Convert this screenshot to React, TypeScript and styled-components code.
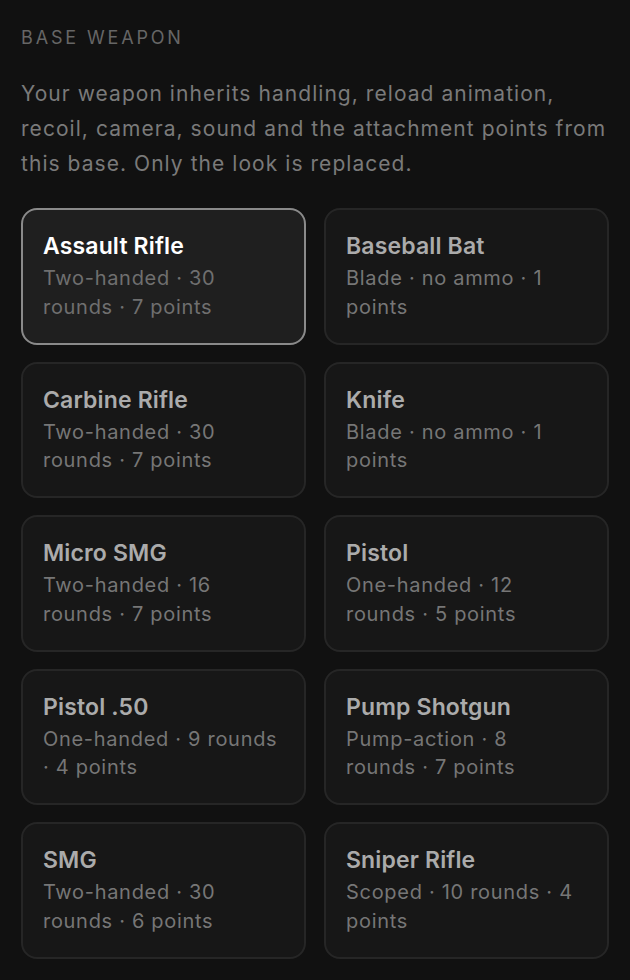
import React, {useState} from "react";
import styled, {createGlobalStyle} from "styled-components";

const GlobalStyle = createGlobalStyle`
    html, body {
        margin: 0;
        padding: 0;
        background: #111111;
    }
    body {
        font-family: Inter, "Noto Sans", "Liberation Sans", sans-serif;
        -webkit-font-smoothing: antialiased;
    }
`;

const Page = styled.div`
    padding: 27px 21px 20px;
    min-height: 980px;
    box-sizing: border-box;
    background: #111111;
`;

const Label = styled.div`
    font-size: 18px;
    letter-spacing: 2.85px;
    text-transform: uppercase;
    color: #666666;
    line-height: 22px;
    margin-bottom: 27px;
`;

const Intro = styled.p`
    margin: 0 0 27px;
    font-size: 21px;
    line-height: 35px;
    letter-spacing: 1.05px;
    color: #7a7a7a;
`;

const Grid = styled.div`
    display: grid;
    grid-template-columns: 1fr 1fr;
    gap: 17px 18px;
`;

const Card = styled.button<{
    active: boolean;
}>`
    text-align: left;
    font-family: inherit;
    cursor: pointer;
    box-sizing: border-box;
    height: 136.5px;
    padding: 21px 25.5px 0 20px;
    border-radius: 16px;
    background: ${props => props.active ? '#1f1f1f' : '#171717'};
    border: ${props => props.active ? '2px solid #8a8a8a' : '2px solid #262626'};
    display: flex;
    flex-direction: column;
    .card-title {
        font-size: 23px;
        font-weight: 600;
        line-height: 30px;
        letter-spacing: 0.15px;
        color: ${props => props.active ? '#ffffff' : '#ababab'};
        margin-bottom: 3px;
    }
    .card-desc {
        font-size: 20px;
        line-height: 28.5px;
        letter-spacing: 0.7px;
        color: ${props => props.active ? '#6f6f6f' : '#767676'};
    }
`;

interface Weapon {
    name: string;
    desc: string;
}

const weapons: Weapon[] = [
    {name: 'Assault Rifle', desc: 'Two-handed · 30 rounds · 7 points'},
    {name: 'Baseball Bat', desc: 'Blade · no ammo · 1 points'},
    {name: 'Carbine Rifle', desc: 'Two-handed · 30 rounds · 7 points'},
    {name: 'Knife', desc: 'Blade · no ammo · 1 points'},
    {name: 'Micro SMG', desc: 'Two-handed · 16 rounds · 7 points'},
    {name: 'Pistol', desc: 'One-handed · 12 rounds · 5 points'},
    {name: 'Pistol .50', desc: 'One-handed · 9 rounds · 4 points'},
    {name: 'Pump Shotgun', desc: 'Pump-action · 8 rounds · 7 points'},
    {name: 'SMG', desc: 'Two-handed · 30 rounds · 6 points'},
    {name: 'Sniper Rifle', desc: 'Scoped · 10 rounds · 4 points'},
];

const App: React.FC = () => {
    const [selected, setSelected] = useState('Assault Rifle');
    return <>
        <GlobalStyle />
        <Page>
            <Label>Base weapon</Label>
            <Intro>
                Your weapon inherits handling, reload animation, recoil, camera, sound and the attachment points from this base. Only the look is replaced.
            </Intro>
            <Grid>
                {weapons.map(w => (
                    <Card
                    key={w.name}
                    active={selected === w.name}
                    onClick={() => setSelected(w.name)}
                    >
                        <div className="card-title">{w.name}</div>
                        <div className="card-desc">{w.desc}</div>
                    </Card>
                ))}
            </Grid>
        </Page>
    </>
}
export default App;
